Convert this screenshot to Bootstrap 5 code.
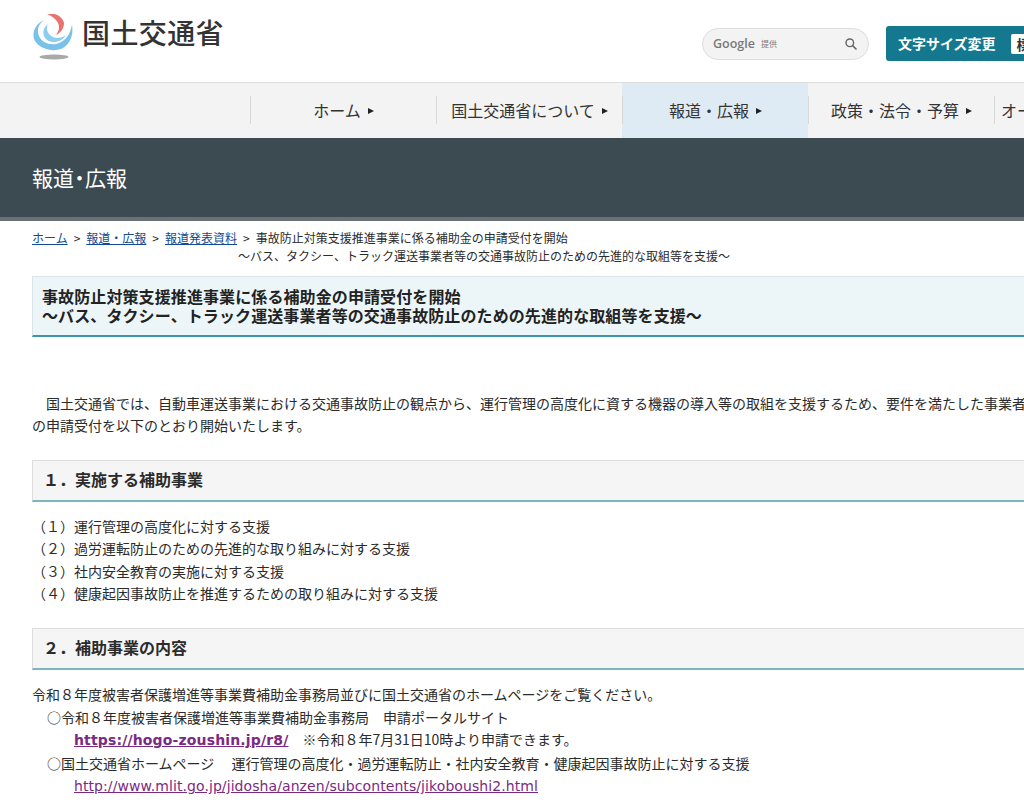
<!DOCTYPE html>
<html lang="ja">
<head>
  <meta charset="UTF-8">
  <meta name="viewport" content="width=device-width, initial-scale=1.0">
  <title>事故防止対策支援推進事業に係る補助金の申請受付を開始 - 国土交通省</title>
  <link href="https://cdn.jsdelivr.net/npm/bootstrap@5.3.2/dist/css/bootstrap.min.css" rel="stylesheet">
  <style>
    html, body {
      overflow-x: hidden;
    }
    body {
      font-family: "Noto Sans CJK JP", "Liberation Sans", sans-serif;
      font-size: 14px;
      line-height: 22.4px;
      color: #2b2b2b;
      background: #fff;
    }
    .page-wrap {
      width: 1240px;
    }
    .site-head {
      height: 82px;
      padding: 14px 0 0 32px;
    }
    .logo-mark {
      width: 42px;
      height: 46px;
    }
    .logo-text {
      font-size: 28px;
      line-height: 40px;
      margin: -2px 0 0 8px;
      color: #333;
      font-weight: 500;
      letter-spacing: .4px;
    }
    .search-box {
      width: 167px;
      height: 32px;
      margin: 14px 0 0 478px;
      padding: 0 10px;
      background: #f3f3f3;
      border: 1px solid #ddd;
      border-radius: 16px;
    }
    .google-word {
      font-family: "Open Sans", "Liberation Sans", sans-serif;
      font-size: 12.5px;
      font-weight: 600;
      color: #7a7a7a;
    }
    .google-sub {
      font-size: 8px;
      color: #777;
      margin-left: 6px;
    }
    .size-box {
      width: 220px;
      height: 35px;
      margin: 12px 0 0 17px;
      padding: 0 12px;
      background: #14788f;
      border-radius: 3px;
      color: #fff;
      font-size: 14px;
      font-weight: 700;
    }
    .size-current {
      background: #fff;
      color: #333;
      border-radius: 2px;
      padding: 0 6px;
      line-height: 20px;
      margin-left: 15px;
    }
    .global-nav {
      height: 56px;
      background: #f3f3f3;
      border-top: 1px solid #ddd;
      padding-left: 250px;
    }
    .nav-cell {
      width: 186px;
      padding: 0 0 0 1px;
      color: #333;
      font-size: 16px;
      text-decoration: none;
      position: relative;
    }
    .nav-cell::before {
      content: "";
      position: absolute;
      left: 0;
      top: 13px;
      height: 28px;
      border-left: 1px solid #d8d8d8;
    }
    .nav-cell.active {
      background: #deeaf4;
    }
    .nav-cell.last-cell {
      width: auto;
      padding-left: 7px;
      padding-right: 7px;
    }
    .nav-arrow {
      display: inline-block;
      margin-left: 7px;
      border-left: 6px solid #222;
      border-top: 3.5px solid transparent;
      border-bottom: 3.5px solid transparent;
    }
    .page-band {
      height: 83px;
      padding-left: 32px;
      background: #3c4b52;
      border-bottom: 4px solid #667277;
      color: #fff;
      font-size: 21px;
      line-height: 78px;
    }
    .band-dot {
      margin: 0 -5px;
    }
    .content-area {
      padding: 8px 0 0 32px;
      width: 1200px;
    }
    .crumbs {
      font-size: 12px;
      line-height: 18px;
      height: 36px;
      margin: 0;
    }
    .crumbs a {
      color: #124a94;
    }
    .crumb-sep {
      margin: 0 3.3px;
    }
    .crumb-sub {
      display: block;
      padding-left: 206px;
    }
    .news-title {
      margin: 11px 0 0;
      padding: 10px 9px 11px;
      height: 61px;
      font-size: 16px;
      line-height: 19px;
      font-weight: 700;
      letter-spacing: .1px;
      color: #222;
      background: #ecf5f8;
      border: 1px solid #d9e4e7;
      border-bottom: 2px solid #3a96a8;
    }
    .lead-text {
      margin: 55px 0 0;
    }
    .sec-title {
      height: 42px;
      margin: 23px 0 13px;
      padding-left: 10px;
      font-size: 16px;
      line-height: 37px;
      font-weight: 700;
      color: #2b2b2b;
      background: #f5f5f5;
      border: 1px solid #ddd;
      border-bottom: 2px solid #7db4bf;
    }
    .plain-block + .sec-title {
      margin-top: 24px;
    }
    .plain-block {
      margin: 0;
    }
    .indent-one {
      padding-left: 15px;
    }
    .indent-two {
      padding-left: 42px;
    }
    .link-strong {
      color: #7b2a83;
      font-family: "DejaVu Sans", sans-serif;
      font-weight: 700;
      font-size: 14px;
      letter-spacing: .15px;
    }
    .link-plain {
      color: #7b2a83;
      font-family: "DejaVu Sans", sans-serif;
      font-size: 14px;
      letter-spacing: .08px;
    }
  </style>
</head>
<body>
  <div class="page-wrap">
    <header class="site-head d-flex align-items-start">
      <svg class="logo-mark flex-shrink-0" viewBox="0 0 42 46" aria-hidden="true">
        <path d="M13 6 C3 9 -1 20 3 27 C8 35 20 38 29 35 C37 32 42 22 40 11 C38 21 33 28 24 30 C14 32 5 25 6 16 C6 12 9 8 13 6 Z" fill="#79c1e8"/>
        <path d="M16 10 C10 14 10 22 15 26 C21 30 30 28 34 21 C29 25 22 25 18 21 C15 18 14 14 16 10 Z" fill="#8ccdf0"/>
        <path d="M15 0 C23 -2 31 3 32 9 C32 15 28 19 24 21 C27 17 28 13 26 9 C24 5 20 2 15 0 Z" fill="#e8736f"/>
        <ellipse cx="22" cy="43" rx="14.5" ry="2.4" fill="#a9a9a9"/>
      </svg>
      <div class="logo-text">国土交通省</div>
      <form class="search-box d-flex align-items-center flex-shrink-0">
        <span class="google-word">Google</span>
        <span class="google-sub">提供</span>
        <svg class="ms-auto" width="14" height="14" viewBox="0 0 14 14" aria-hidden="true">
          <circle cx="5.8" cy="5.8" r="3.8" fill="none" stroke="#666" stroke-width="1.4"/>
          <path d="M8.6 8.6 L12.5 12.5" stroke="#666" stroke-width="1.6"/>
        </svg>
      </form>
      <div class="size-box d-flex align-items-center flex-shrink-0">
        <span>文字サイズ変更</span>
        <span class="size-current">標準</span>
      </div>
    </header>

    <nav class="global-nav d-flex">
      <a class="nav-cell d-flex align-items-center justify-content-center" href="#">ホーム<i class="nav-arrow"></i></a>
      <a class="nav-cell d-flex align-items-center justify-content-center" href="#">国土交通省について<i class="nav-arrow"></i></a>
      <a class="nav-cell active d-flex align-items-center justify-content-center" href="#">報道・広報<i class="nav-arrow"></i></a>
      <a class="nav-cell d-flex align-items-center justify-content-center" href="#">政策・法令・予算<i class="nav-arrow"></i></a>
      <a class="nav-cell last-cell d-flex align-items-center justify-content-center" href="#">オープンデータ<i class="nav-arrow"></i></a>
    </nav>

    <div class="page-band">報道<span class="band-dot">・</span>広報</div>

    <main class="content-area">
      <p class="crumbs">
        <a href="#">ホーム</a> <span class="crumb-sep">&gt;</span> <a href="#">報道・広報</a> <span class="crumb-sep">&gt;</span> <a href="#">報道発表資料</a> <span class="crumb-sep">&gt;</span> 事故防止対策支援推進事業に係る補助金の申請受付を開始
        <span class="crumb-sub">～バス、タクシー、トラック運送事業者等の交通事故防止のための先進的な取組等を支援～</span>
      </p>

      <h1 class="news-title">事故防止対策支援推進事業に係る補助金の申請受付を開始<br>～バス、タクシー、トラック運送事業者等の交通事故防止のための先進的な取組等を支援～</h1>

      <p class="lead-text">　国土交通省では、自動車運送事業における交通事故防止の観点から、運行管理の高度化に資する機器の導入等の取組を支援するため、要件を満たした事業者等への補助金<br>の申請受付を以下のとおり開始いたします。</p>

      <h2 class="sec-title">１．実施する補助事業</h2>
      <div class="plain-block">
        <div>（１）運行管理の高度化に対する支援</div>
        <div>（２）過労運転防止のための先進的な取り組みに対する支援</div>
        <div>（３）社内安全教育の実施に対する支援</div>
        <div>（４）健康起因事故防止を推進するための取り組みに対する支援</div>
      </div>

      <h2 class="sec-title">２．補助事業の内容</h2>
      <div class="plain-block">
        <div>令和８年度被害者保護増進等事業費補助金事務局並びに国土交通省のホームページをご覧ください。</div>
        <div class="indent-one">○令和８年度被害者保護増進等事業費補助金事務局　申請ポータルサイト</div>
        <div class="indent-two"><a class="link-strong" href="#">https://hogo-zoushin.jp/r8/</a>　※令和８年7月31日10時より申請できます。</div>
        <div class="indent-one">○国土交通省ホームページ　 運行管理の高度化・過労運転防止・社内安全教育・健康起因事故防止に対する支援</div>
        <div class="indent-two"><a class="link-plain" href="#">http://www.mlit.go.jp/jidosha/anzen/subcontents/jikoboushi2.html</a></div>
      </div>
    </main>
  </div>
</body>
</html>
